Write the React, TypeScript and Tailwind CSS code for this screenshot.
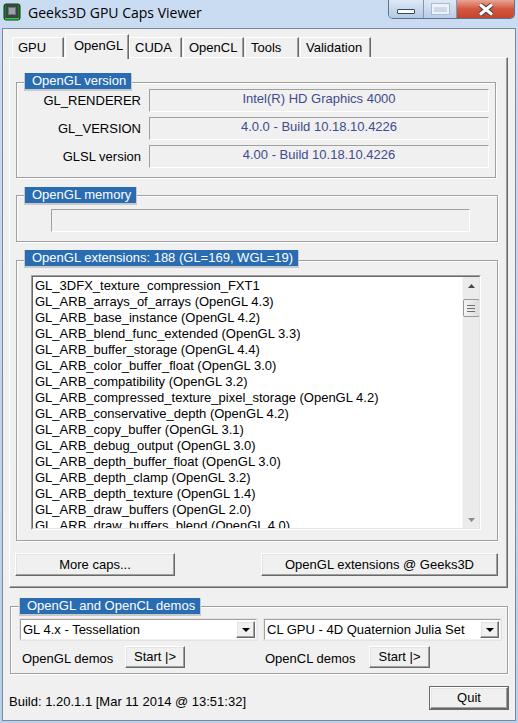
import React from "react";

const ui = "font-['Liberation_Sans',Arial,sans-serif] text-[13px] leading-[16px] text-black";
const raised =
  "bg-[#f0f0f0] border border-t-white border-l-white border-r-[#696969] border-b-[#696969] shadow-[inset_-1px_-1px_0_#a0a0a0,inset_1px_1px_0_#e3e3e3]";
const sunken = "border border-t-[#a0a0a0] border-l-[#a0a0a0] border-r-white border-b-white";
const group = "relative border border-[#a0a0a0] shadow-[inset_1px_1px_0_#fff,1px_1px_0_#fff]";

const extensions = [
  "GL_3DFX_texture_compression_FXT1",
  "GL_ARB_arrays_of_arrays (OpenGL 4.3)",
  "GL_ARB_base_instance (OpenGL 4.2)",
  "GL_ARB_blend_func_extended (OpenGL 3.3)",
  "GL_ARB_buffer_storage (OpenGL 4.4)",
  "GL_ARB_color_buffer_float (OpenGL 3.0)",
  "GL_ARB_compatibility (OpenGL 3.2)",
  "GL_ARB_compressed_texture_pixel_storage (OpenGL 4.2)",
  "GL_ARB_conservative_depth (OpenGL 4.2)",
  "GL_ARB_copy_buffer (OpenGL 3.1)",
  "GL_ARB_debug_output (OpenGL 3.0)",
  "GL_ARB_depth_buffer_float (OpenGL 3.0)",
  "GL_ARB_depth_clamp (OpenGL 3.2)",
  "GL_ARB_depth_texture (OpenGL 1.4)",
  "GL_ARB_draw_buffers (OpenGL 2.0)",
  "GL_ARB_draw_buffers_blend (OpenGL 4.0)",
];

const tabs = [
  { name: "GPU", w: "w-[52px]" },
  { name: "OpenGL", w: "w-[64px]", active: true },
  { name: "CUDA", w: "w-[53px]" },
  { name: "OpenCL", w: "w-[61px]" },
  { name: "Tools", w: "w-[54px]" },
  { name: "Validation", w: "w-[71px]" },
];

const Legend = ({ children, className = "" }: { children: React.ReactNode; className?: string }) => (
  <div
    className={
      "absolute left-[7px] h-[18px] bg-[#2a6cb2] text-white pl-[7px] pr-[5px] border-x border-b-2 border-[#c9c9c9] whitespace-nowrap " +
      className
    }
  >
    {children}
  </div>
);

const AppIcon = () => (
  <svg width="18" height="18" viewBox="0 0 18 18">
    <rect x="1" y="1" width="16" height="16" rx="2" fill="#1f7a2c" stroke="#0d3a14" />
    <rect x="3" y="2" width="12" height="13" rx="1" fill="#3d4346" />
    <rect x="5" y="4" width="8" height="8" fill="#6b7479" />
    <rect x="6" y="5" width="6" height="6" fill="#9aa3a8" />
    <rect x="2" y="15" width="14" height="1.5" fill="#39c24a" />
  </svg>
);

const Row = ({ label, value }: { label: string; value: string }) => (
  <div className="flex items-center h-[23px]">
    <div className="w-[124px] text-right">{label}</div>
    <div className={"ml-[8px] w-[340px] h-[23px] text-center text-[#414b8c] leading-[18px] " + sunken}>{value}</div>
  </div>
);

const Combo = ({ value }: { value: string }) => (
  <div className="w-[239px] h-[23px] bg-white border border-[#e3e3e3] flex items-center">
    <div className="flex-1 h-full border border-t-[#a0a0a0] border-l-[#a0a0a0] border-r-[#f0f0f0] border-b-[#f0f0f0] flex items-center pl-[2px]">
      <span className="flex-1 whitespace-nowrap">{value}</span>
      <div className={"w-[19px] h-[17px] mr-[1px] flex items-center justify-center " + raised}>
        <svg width="8" height="4" viewBox="0 0 8 4">
          <path d="M0 0h8L4 4z" fill="#000" />
        </svg>
      </div>
    </div>
  </div>
);

export default function App() {
  return (
    <div className={"w-[518px] h-[723px] bg-gradient-to-b from-[#cadcf1] to-[#b9d0ea] flex flex-col " + ui}>
      {/* title bar */}
      <div className="h-[28px] flex items-start">
        <div className="ml-[3px] mt-[3px]">
          <AppIcon />
        </div>
        <div className="ml-[7px] mt-[3px] font-['Open_Sans',sans-serif] text-[14px] leading-[20px] text-black">
          Geeks3D GPU Caps Viewer
        </div>
        <div className="ml-auto mr-[3px] flex h-[19px] rounded-b-[5px] border border-t-0 border-[#5a7495] overflow-hidden">
          <div className="w-[35px] bg-gradient-to-b from-[#dfe9f5] to-[#b3c9e3] border-r border-[#7f97b6] flex items-center justify-center">
            <div className="w-[18px] h-[5px] mt-[5px] bg-white border border-[#35485f] rounded-[1px]" />
          </div>
          <div className="w-[33px] bg-gradient-to-b from-[#dfe9f5] to-[#b8cde6] border-r border-[#7f97b6] flex items-center justify-center">
            <div className="w-[17px] h-[10px] border-2 border-t-[3px] border-[#eef3fa] outline outline-1 outline-[#a9bcd4]" />
          </div>
          <div className="w-[57px] bg-gradient-to-b from-[#e8a394] via-[#d2573f] to-[#c4442c] flex items-center justify-center">
            <svg width="20" height="13" viewBox="0 0 20 13">
              <path d="M4 1.5L16 11.5M16 1.5L4 11.5" stroke="#3f3f3f" strokeWidth="5" />
              <path d="M4 1.5L16 11.5M16 1.5L4 11.5" stroke="#fff" strokeWidth="3" />
            </svg>
          </div>
        </div>
      </div>

      {/* client area */}
      <div className="ml-[2px] w-[514px] h-[693px] border border-[#7d8999] bg-[#f0f0f0] flex flex-col">
        {/* tab strip */}
        <div className="relative z-10 h-[28px] flex items-end pl-[9px]">
          {tabs.map((t) =>
            t.active ? (
              <div
                key={t.name}
                className={
                  "relative h-[25px] -mb-[2px] pl-[8px] pt-[3px] bg-[#f0f0f0] border-t border-l border-r border-t-white border-l-white border-r-[#696969] shadow-[inset_-1px_0_0_#a0a0a0] " +
                  t.w
                }
              >
                {t.name}
              </div>
            ) : (
              <div
                key={t.name}
                className={
                  "h-[20px] pl-[5px] pt-[2px] mr-[1px] border-t border-l border-r border-t-white border-l-white border-r-[#696969] shadow-[inset_-1px_0_0_#a0a0a0] " +
                  t.w
                }
              >
                {t.name}
              </div>
            )
          )}
        </div>

        {/* tab panel */}
        <div className="ml-[6px] w-[499px] h-[531px] border border-t-white border-l-white border-r-[#696969] border-b-[#696969] shadow-[inset_-1px_-1px_0_#a0a0a0] flex flex-col">
          <div className={"ml-[6px] mt-[24px] w-[480px] h-[96px] pt-[6px] flex flex-col gap-[5px] " + group}>
            <Legend className="-top-[10px]">OpenGL version</Legend>
            <Row label="GL_RENDERER" value="Intel(R) HD Graphics 4000" />
            <Row label="GL_VERSION" value="4.0.0 - Build 10.18.10.4226" />
            <Row label="GLSL version" value="4.00 - Build 10.18.10.4226" />
          </div>

          <div className={"ml-[6px] mt-[17px] w-[482px] h-[47px] " + group}>
            <Legend className="-top-[9px]">OpenGL memory</Legend>
            <div className={"ml-[34px] mt-[13px] w-[419px] h-[23px] " + sunken} />
          </div>

          <div className={"ml-[6px] mt-[18px] w-[482px] h-[281px] " + group}>
            <Legend className="-top-[11px]">OpenGL extensions: 188 (GL=169, WGL=19)</Legend>
            <div className="ml-[14px] mt-[14px] w-[450px] h-[255px] border border-t-[#a0a0a0] border-l-[#a0a0a0] border-r-white border-b-white">
              <div className="w-full h-full bg-white border border-t-[#696969] border-l-[#696969] border-r-[#e3e3e3] border-b-[#e3e3e3] flex overflow-hidden">
                <div className="flex-1 pl-[2px] pt-[1px] overflow-hidden">
                  {extensions.map((e) => (
                    <div key={e} className="h-[16px] whitespace-nowrap">
                      {e}
                    </div>
                  ))}
                </div>
                <div className="w-[17px] h-full bg-[#ebebeb] border-l border-[#f5f5f5] flex flex-col items-center">
                  <div className="h-[17px] w-full flex items-center justify-center">
                    <svg width="7" height="4" viewBox="0 0 7 4">
                      <path d="M3.5 0L7 4H0z" fill="#4a4a4a" />
                    </svg>
                  </div>
                  <div className="mt-[5px] w-[17px] h-[18px] rounded-[2px] border border-[#9a9a9a] bg-gradient-to-r from-[#f5f5f5] to-[#dcdcdc] flex flex-col items-center justify-center gap-[2px]">
                    <div className="w-[8px] h-[1px] bg-[#6f6f6f]" />
                    <div className="w-[8px] h-[1px] bg-[#6f6f6f]" />
                    <div className="w-[8px] h-[1px] bg-[#6f6f6f]" />
                  </div>
                  <div className="flex-1" />
                  <div className="h-[17px] w-full flex items-center justify-center">
                    <svg width="7" height="4" viewBox="0 0 7 4">
                      <path d="M0 0H7L3.5 4z" fill="#8a8a8a" />
                    </svg>
                  </div>
                </div>
              </div>
            </div>
          </div>

          <div className="mt-[12px] ml-[5px] flex">
            <div className={"w-[160px] h-[23px] flex items-center justify-center " + raised}>More caps...</div>
            <div className={"ml-[86px] w-[237px] h-[23px] flex items-center justify-center " + raised}>
              OpenGL extensions @ Geeks3D
            </div>
          </div>
        </div>

        {/* demos group */}
        <div className={"ml-[7px] mt-[18px] w-[498px] h-[68px] pl-[8px] pt-[11px] " + group}>
          <Legend className="-top-[9px] left-[8px]">OpenGL and OpenCL demos</Legend>
          <div className="flex gap-[5px]">
            <Combo value="GL 4.x - Tessellation" />
            <Combo value="CL GPU - 4D Quaternion Julia Set" />
          </div>
          <div className="flex gap-[5px] mt-[5px]">
            <div className="w-[239px] flex items-center pl-[3px]">
              <div className="w-[103px] pt-[3px]">OpenGL demos</div>
              <div className={"w-[60px] h-[22px] flex items-center justify-center " + raised}>Start |&gt;</div>
            </div>
            <div className="w-[239px] flex items-center pl-[2px]">
              <div className="w-[104px] pt-[3px]">OpenCL demos</div>
              <div className={"w-[61px] h-[22px] flex items-center justify-center " + raised}>Start |&gt;</div>
            </div>
          </div>
        </div>

        {/* footer */}
        <div className="mt-[12px] flex items-start">
          <div className="ml-[6px] mt-[8px]">Build: 1.20.1.1 [Mar 11 2014 @ 13:51:32]</div>
          <div className="ml-auto mr-[6px] w-[80px] h-[24px] border border-[#696969]">
            <div className={"w-full h-full flex items-center justify-center " + raised}>Quit</div>
          </div>
        </div>
      </div>
    </div>
  );
}
